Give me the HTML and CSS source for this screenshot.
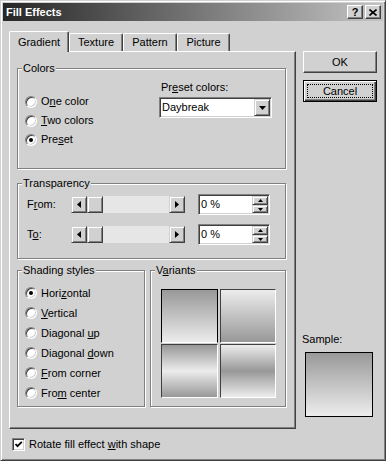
FILE: index.html
```html
<!DOCTYPE html>
<html lang="en">
<head>
    <meta charset="UTF-8">
    <meta name="viewport" content="width=device-width, initial-scale=1.0">
    <title>Fill Effects</title>
    <link rel="stylesheet" href="styles.css">
</head>
<body>
<div class="window">
    <!-- Title bar -->
    <div class="titlebar">
        <span class="title">Fill Effects</span>
        <div class="title-buttons">
            <span class="tbtn">?</span>
            <span class="tbtn">
                <svg width="8" height="7" viewBox="0 0 8 7"><path d="M0.5 0.5 L7.5 6.5 M7.5 0.5 L0.5 6.5" stroke="#000" stroke-width="1.6" fill="none"/></svg>
            </span>
        </div>
    </div>

    <div class="main">
        <div class="tabctl">
            <div class="tabs">
                <div class="tab active">Gradient</div>
                <div class="tab w54">Texture</div>
                <div class="tab w54">Pattern</div>
                <div class="tab w53">Picture</div>
            </div>

            <div class="panel">
                <!-- Colors -->
                <div class="group colors">
                    <span class="legend">Colors</span>
                    <div class="radios">
                        <div class="radio"><span class="dot"></span><span>O<u>n</u>e color</span></div>
                        <div class="radio"><span class="dot"></span><span><u>T</u>wo colors</span></div>
                        <div class="radio"><span class="dot on"></span><span>Pre<u>s</u>et</span></div>
                    </div>
                    <div class="preset">
                        <div class="plabel">Pr<u>e</u>set colors:</div>
                        <div class="combo sunken">
                            <span class="ctext">Daybreak</span>
                            <span class="cbtn raised">
                                <svg width="7" height="4" viewBox="0 0 7 4"><polygon points="0,0 7,0 3.5,4" fill="#000"/></svg>
                            </span>
                        </div>
                    </div>
                </div>

                <!-- Transparency -->
                <div class="group transp">
                    <span class="legend">Transparency</span>
                    <div class="trow">
                        <span class="tlabel">F<u>r</u>om:</span>
                        <div class="hscroll">
                            <span class="sbtn raised"><svg width="4" height="7" viewBox="0 0 4 7"><polygon points="4,0 0,3.5 4,7" fill="#000"/></svg></span>
                            <span class="thumb raised"></span>
                            <span class="track"></span>
                            <span class="sbtn raised"><svg width="4" height="7" viewBox="0 0 4 7"><polygon points="0,0 4,3.5 0,7" fill="#000"/></svg></span>
                        </div>
                        <div class="spin sunken">
                            <span class="stext">0 %</span>
                            <span class="spinbtns">
                                <span class="sb up raised"><svg width="5" height="3" viewBox="0 0 5 3"><polygon points="0,3 5,3 2.5,0" fill="#000"/></svg></span>
                                <span class="sb down raised"><svg width="5" height="3" viewBox="0 0 5 3"><polygon points="0,0 5,0 2.5,3" fill="#000"/></svg></span>
                            </span>
                        </div>
                    </div>
                    <div class="trow">
                        <span class="tlabel">T<u>o</u>:</span>
                        <div class="hscroll">
                            <span class="sbtn raised"><svg width="4" height="7" viewBox="0 0 4 7"><polygon points="4,0 0,3.5 4,7" fill="#000"/></svg></span>
                            <span class="thumb raised"></span>
                            <span class="track"></span>
                            <span class="sbtn raised"><svg width="4" height="7" viewBox="0 0 4 7"><polygon points="0,0 4,3.5 0,7" fill="#000"/></svg></span>
                        </div>
                        <div class="spin sunken">
                            <span class="stext">0 %</span>
                            <span class="spinbtns">
                                <span class="sb up raised"><svg width="5" height="3" viewBox="0 0 5 3"><polygon points="0,3 5,3 2.5,0" fill="#000"/></svg></span>
                                <span class="sb down raised"><svg width="5" height="3" viewBox="0 0 5 3"><polygon points="0,0 5,0 2.5,3" fill="#000"/></svg></span>
                            </span>
                        </div>
                    </div>
                </div>

                <div class="bottom-row">
                    <!-- Shading styles -->
                    <div class="group shading">
                        <span class="legend">Shading styles</span>
                        <div class="radio r20"><span class="dot on"></span><span>Hori<u>z</u>ontal</span></div>
                        <div class="radio r20"><span class="dot"></span><span><u>V</u>ertical</span></div>
                        <div class="radio r20"><span class="dot"></span><span>Diagonal <u>u</u>p</span></div>
                        <div class="radio r20"><span class="dot"></span><span>Diagonal <u>d</u>own</span></div>
                        <div class="radio r20"><span class="dot"></span><span><u>F</u>rom corner</span></div>
                        <div class="radio r20"><span class="dot"></span><span>Fro<u>m</u> center</span></div>
                    </div>

                    <!-- Variants -->
                    <div class="group variants">
                        <span class="legend">V<u>a</u>riants</span>
                        <div class="tiles">
                            <div class="tile v1 selected"></div>
                            <div class="tile v2"></div>
                            <div class="tile v3"></div>
                            <div class="tile v4"></div>
                        </div>
                    </div>
                </div>
            </div>
        </div>

        <div class="side">
            <div class="btn">OK</div>
            <div class="btn default"><span class="focus">Cancel</span></div>
            <div class="sample">
                <div class="slabel">Sample:</div>
                <div class="sbox"></div>
            </div>
        </div>
    </div>

    <div class="footer">
        <span class="check sunken">
            <svg width="9" height="9" viewBox="0 0 9 9"><polyline points="1.5,4 3.5,6.2 7.8,1.8" stroke="#000" stroke-width="1.8" fill="none"/></svg>
        </span>
        <span>Rotate fill effect <u>w</u>ith shape</span>
    </div>
</div>
</body>
</html>
```

FILE: styles.css
```css
* {
    box-sizing: border-box;
}

body {
    margin: 0;
    font-family: "Liberation Sans", Arial, sans-serif;
    font-size: 11px;
    line-height: 13px;
    color: #000;
    background: #d1d1d1;
}

u {
    text-decoration: underline;
    text-underline-offset: 1px;
}

/* 3D helpers */
.raised {
    border: 1px solid;
    border-color: #d1d1d1 #404040 #404040 #d1d1d1;
    box-shadow: inset 1px 1px #fff, inset -1px -1px #808080;
    background: #d1d1d1;
}

.sunken {
    border: 1px solid;
    border-color: #808080 #fff #fff #808080;
    box-shadow: inset 1px 1px #404040, inset -1px -1px #d1d1d1;
    background: #fff;
}

.window {
    width: 386px;
    height: 461px;
    background: #d1d1d1;
    border: 1px solid;
    border-color: #d1d1d1 #404040 #404040 #d1d1d1;
    box-shadow: inset 1px 1px #fff, inset -1px -1px #808080;
    padding: 2px;
}

/* title bar */
.titlebar {
    height: 18px;
    display: flex;
    align-items: center;
    padding: 0 2px 0 2px;
    background: linear-gradient(to right, #262626, #c4c4c4);
}

.title {
    color: #fff;
    font-weight: bold;
    padding-left: 1px;
}

.title-buttons {
    margin-left: auto;
    display: flex;
    gap: 2px;
}

.tbtn {
    width: 16px;
    height: 14px;
    display: flex;
    align-items: center;
    justify-content: center;
    font-weight: bold;
    font-size: 11px;
    border: 1px solid;
    border-color: #fff #404040 #404040 #fff;
    box-shadow: inset -1px -1px #808080;
    background: #d1d1d1;
}

/* main area */
.main {
    display: flex;
    padding: 10px 6px 0 6px;
}

.tabctl {
    width: 287px;
}

.tabs {
    display: flex;
    align-items: flex-end;
    height: 20px;
    position: relative;
    z-index: 1;
}

.tab {
    height: 18px;
    border: 1px solid;
    border-color: #fff #404040 transparent #fff;
    border-bottom: none;
    border-radius: 2px 2px 0 0;
    box-shadow: inset -1px 0 #808080;
    text-align: center;
    line-height: 17px;
    background: #d1d1d1;
}

.tab.active {
    width: 60px;
    height: 21px;
    margin-bottom: -1px;
    line-height: 20px;
}

.w54 { width: 54px; }
.w53 { width: 53px; }

.panel {
    height: 378px;
    border: 1px solid;
    border-color: #fff #404040 #404040 #fff;
    box-shadow: inset -1px -1px #808080;
    padding: 16px 0 0 7px;
}

/* group boxes */
.group {
    position: relative;
    border: 1px solid #808080;
    box-shadow: inset 1px 1px #fff, 1px 1px #fff;
}

.legend {
    position: absolute;
    top: -7px;
    left: 4px;
    padding: 0 1px;
    background: #d1d1d1;
}

.radio {
    display: flex;
    align-items: center;
    height: 19px;
    gap: 4px;
}

.radio.r20 {
    height: 20px;
}

.dot {
    position: relative;
    width: 12px;
    height: 12px;
    border-radius: 50%;
    border: 1px solid;
    border-color: #808080 #fff #fff #808080;
    box-shadow: inset 1px 1px #404040, inset -1px -1px #d1d1d1;
    background: #fff;
    flex: none;
}

.dot.on::after {
    content: "";
    position: absolute;
    left: 3px;
    top: 3px;
    width: 4px;
    height: 4px;
    border-radius: 50%;
    background: #000;
}

.colors {
    width: 269px;
    height: 101px;
    display: flex;
}

.radios {
    width: 141px;
    padding: 23px 0 0 7px;
}

.preset {
    padding-top: 12px;
}

.plabel {
    padding-left: 2px;
}

.combo {
    margin-top: 3px;
    width: 113px;
    height: 21px;
    display: flex;
    align-items: center;
    padding-left: 2px;
}

.cbtn {
    width: 16px;
    height: 17px;
    margin: 0 1px 0 auto;
    display: flex;
    align-items: center;
    justify-content: center;
}

.transp {
    width: 269px;
    height: 76px;
    margin-top: 14px;
    padding: 10px 0 0 9px;
}

.trow {
    display: flex;
    align-items: center;
    height: 21px;
}

.trow + .trow {
    margin-top: 9px;
}

.tlabel {
    width: 44px;
}

.hscroll {
    display: flex;
    width: 114px;
    height: 17px;
}

.sbtn {
    width: 16px;
    display: flex;
    align-items: center;
    justify-content: center;
}

.thumb {
    width: 16px;
}

.track {
    flex: 1;
    background: #e6e6e6;
}

.spin {
    margin-left: 13px;
    width: 72px;
    height: 21px;
    display: flex;
    align-items: center;
    padding-left: 2px;
}

.spinbtns {
    margin: 0 1px 0 auto;
    width: 16px;
    height: 17px;
    display: flex;
    flex-direction: column;
}

.sb {
    display: flex;
    align-items: center;
    justify-content: center;
}

.sb.up { height: 9px; }
.sb.down { height: 8px; }

.bottom-row {
    display: flex;
    gap: 5px;
    margin-top: 11px;
}

.shading {
    width: 128px;
    height: 137px;
    padding: 12px 0 0 7px;
}

.variants {
    width: 136px;
    height: 137px;
    padding: 18px 0 0 10px;
}

.tiles {
    display: grid;
    grid-template-columns: 57px 56px;
    grid-template-rows: 54px 54px;
    column-gap: 2px;
    row-gap: 1px;
}

.tile {
    border: 1px solid;
    border-color: #404040 #fff #fff #404040;
}

.tile.selected {
    border-color: #000 #000 #fff #000;
}

.v1 { background: linear-gradient(#989898, #ececec); }
.v2 { background: linear-gradient(#ececec, #989898); }
.v3 { background: linear-gradient(#989898, #ececec 50%, #989898); }
.v4 { background: linear-gradient(#ececec, #989898 50%, #ececec); }

/* side buttons */
.side {
    width: 74px;
    margin-left: 7px;
    padding-top: 20px;
    display: flex;
    flex-direction: column;
}

.btn {
    height: 22px;
    display: flex;
    align-items: center;
    justify-content: center;
    border: 1px solid;
    border-color: #fff #404040 #404040 #fff;
    box-shadow: inset -1px -1px #808080;
}

.btn.default {
    position: relative;
    margin-top: 7px;
    border-color: #000;
    box-shadow: inset 1px 1px #fff, inset -1px -1px #404040, inset -2px -2px #808080;
}

.btn.default::after {
    content: "";
    position: absolute;
    left: 3px;
    top: 3px;
    right: 3px;
    bottom: 3px;
    border: 1px dotted #000;
}

.sample {
    margin-top: auto;
    margin-bottom: 12px;
}

.slabel {
    margin-left: -1px;
}

.sbox {
    margin: 6px 0 0 2px;
    width: 68px;
    height: 65px;
    border: 1px solid #000;
    background: linear-gradient(#999, #ededed);
}

/* footer */
.footer {
    display: flex;
    align-items: center;
    gap: 4px;
    padding: 9px 0 0 9px;
}

.check {
    width: 13px;
    height: 13px;
    display: flex;
    align-items: center;
    justify-content: center;
}
```
